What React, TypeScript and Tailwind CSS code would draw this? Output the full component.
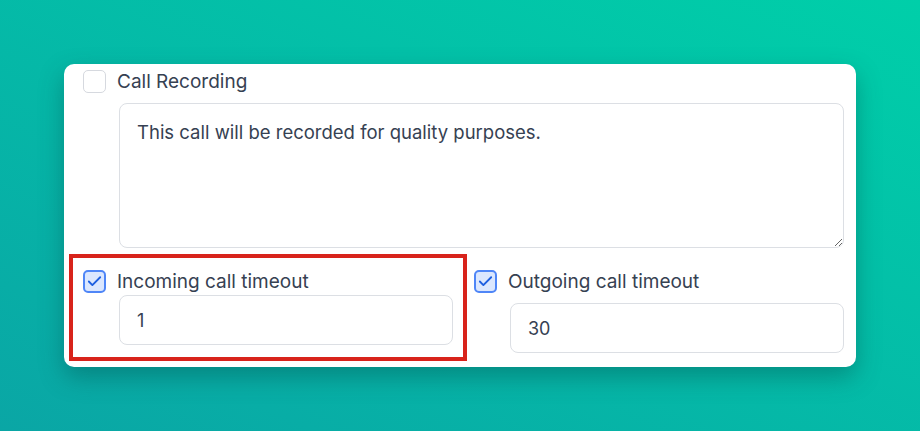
import { Check } from "lucide-react";

const Box = ({ checked }: { checked: boolean }) =>
  checked ? (
    <span className="flex h-[23px] w-[23px] shrink-0 items-center justify-center rounded-[5px] border-2 border-[#4f86f7] bg-[#dbe7fe]">
      <Check className="h-[17px] w-[17px] text-[#1d5fe0]" strokeWidth={2.6} />
    </span>
  ) : (
    <span className="block h-[23px] w-[23px] shrink-0 rounded-[5px] border-[1.5px] border-[#d6d9df] bg-white" />
  );

const Field = ({
  label,
  value,
  offset,
}: {
  label: string;
  value: string;
  offset: string;
}) => (
  <div className="flex flex-col">
    <label className="flex h-[23px] items-center gap-[11px]">
      <Box checked />
      <span className="mt-[2px] text-[19px] text-[#364152]">{label}</span>
    </label>
    <input
      readOnly
      defaultValue={value}
      className={`ml-[36px] h-[50px] rounded-[8px] border border-[#dcdfe4] bg-white px-[17px] text-[18px] text-[#364152] outline-none ${offset}`}
    />
  </div>
);

export default function App() {
  return (
    <div
      className="flex h-[431px] w-[920px] items-start bg-gradient-to-tr from-[#0aa6a5] to-[#00cfa9] pl-[64px] pt-[64px]"
      style={{ fontFamily: "Inter, 'Noto Sans', sans-serif" }}
    >
      <div className="relative w-[792px] rounded-[10px] bg-white pb-[14px] pl-[19px] pr-[12px] pt-[6px] shadow-[0_10px_24px_rgba(0,60,60,0.35)]">
        <label className="flex h-[23px] items-center gap-[11px]">
          <Box checked={false} />
          <span className="mt-[2px] text-[19px] text-[#364152]">Call Recording</span>
        </label>
        <textarea
          readOnly
          defaultValue="This call will be recorded for quality purposes."
          className="ml-[36px] mt-[10px] block h-[145px] w-[725px] rounded-[8px] border border-[#dcdfe4] px-[17px] pt-[15px] text-[18.5px] leading-[26px] text-[#364152] outline-none"
        />
        <div className="mt-[22px] grid grid-cols-2 gap-[21px]">
          <Field label="Incoming call timeout" value="1" offset="mt-[2px]" />
          <Field label="Outgoing call timeout" value="30" offset="mt-[10px]" />
        </div>
        <div className="pointer-events-none absolute left-[5px] top-[190px] h-[107px] w-[398px] border-[4px] border-[#d8231b]" />
      </div>
    </div>
  );
}
